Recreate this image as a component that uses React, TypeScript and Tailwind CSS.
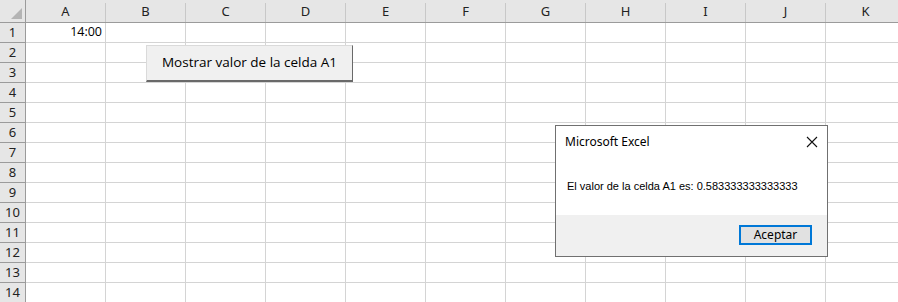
const columns = ['A', 'B', 'C', 'D', 'E', 'F', 'G', 'H', 'I', 'J', 'K'];
const rows = Array.from({ length: 14 }, (_, i) => i + 1);

function CornerCell() {
  return (
    <div className="flex h-[23px] w-[26px] shrink-0 items-end justify-end border-r border-b border-[#9b9b9b] bg-[#e6e6e6] pr-[3px] pb-[3px]">
      <svg width="11" height="11" viewBox="0 0 11 11">
        <polygon points="11,0 11,11 0,11" fill="#b4b4b4" />
      </svg>
    </div>
  );
}

function ColumnHeader({ label }: { label: string }) {
  return (
    <div className="flex h-[23px] w-[80px] shrink-0 items-stretch border-b border-[#9b9b9b] bg-[#e6e6e6]">
      <div className="flex flex-1 items-center justify-center pt-[1px] text-[13px] text-[#222]">
        {label}
      </div>
      <div className="mt-[3px] w-px bg-[#c8c8c8]" />
    </div>
  );
}

function SheetRow({ n }: { n: number }) {
  return (
    <div className="flex h-[20px]">
      <div className="flex w-[26px] shrink-0 items-center justify-center border-r border-b border-[#9b9b9b] bg-[#e6e6e6] text-[13px] text-[#222]">
        {n}
      </div>
      {columns.map((c) => (
        <div
          key={c}
          className="flex w-[80px] shrink-0 items-center justify-end border-r border-b border-[#d4d4d4] bg-white pr-[3px] font-['Open_Sans'] text-[12.5px] text-black"
        >
          {n === 1 && c === 'A' ? '14:00' : ''}
        </div>
      ))}
    </div>
  );
}

function CloseIcon() {
  return (
    <svg width="12" height="12" viewBox="0 0 12 12">
      <path d="M1 1 L11 11 M11 1 L1 11" stroke="#111" strokeWidth="1.1" />
    </svg>
  );
}

function MessageBox() {
  return (
    <div className="absolute top-[125px] left-[555px] flex h-[132px] w-[273px] flex-col border border-[#707070] bg-white font-['Noto_Sans'] text-[12px] text-black">
      <div className="flex h-[30px] items-center justify-between pr-[9px] pl-[9px] pt-[1px]">
        <span>Microsoft Excel</span>
        <CloseIcon />
      </div>
      <div className="flex h-[59px] items-center pl-[11px] pt-[1px] font-['Liberation_Sans'] text-[11px]">
        El valor de la celda A1 es: 0.583333333333333
      </div>
      <div className="flex flex-1 items-start justify-end bg-[#f0f0f0] pt-[10px] pr-[15px]">
        <button
          type="button"
          className="flex h-[20px] w-[73px] items-center justify-center border-2 border-[#0078d7] bg-[#e1e1e1] text-[12px] text-black"
        >
          Aceptar
        </button>
      </div>
    </div>
  );
}

export default function App() {
  return (
    <div className="relative h-[302px] w-[898px] overflow-hidden bg-white font-['Noto_Sans']">
      <div className="flex">
        <CornerCell />
        {columns.map((c) => (
          <ColumnHeader key={c} label={c} />
        ))}
      </div>
      {rows.map((n) => (
        <SheetRow key={n} n={n} />
      ))}
      <button
        type="button"
        className="absolute top-[45px] left-[146px] flex h-[37px] w-[207px] items-center justify-center border border-[#dadada] border-r-[#696969] border-b-2 border-b-[#696969] bg-[#f0f0f0] pb-[1px] font-['Open_Sans'] text-[13.5px] text-black"
      >
        Mostrar valor de la celda A1
      </button>
      <MessageBox />
    </div>
  );
}
